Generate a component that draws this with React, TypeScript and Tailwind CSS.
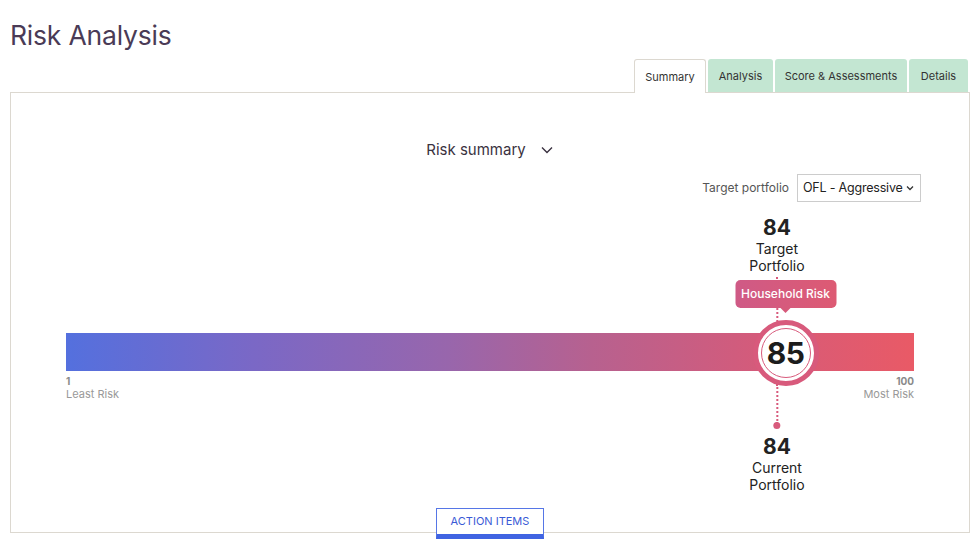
import React from "react";

const FONT = { fontFamily: "Inter, 'Noto Sans', 'Liberation Sans', sans-serif" };

function pos(v: number) {
  return ((v - 1) / 99) * 100;
}

export default function App() {
  const target = 84;
  const current = 84;
  const household = 85;
  return (
    <div className="w-[980px] h-[544px] bg-white overflow-hidden text-[#2b2b2b]" style={FONT}>
      <h1 className="pl-[10px] pt-[18px] text-[26.5px] leading-[34px] text-[#4a3b56] tracking-[-0.2px]">Risk Analysis</h1>
      <div className="flex justify-end gap-[2px] pr-[12px] mt-[7px]">
        <div className="w-[72px] h-[34px] flex items-center justify-center text-[11px] bg-white border border-[#dcd8d0] border-b-0 rounded-t-[3px] relative z-10 text-[#333] pt-[2px]">Summary</div>
        <div className="w-[65px] h-[33px] flex items-center justify-center text-[11px] bg-[#c3e6d2] rounded-t-[3px] text-[#333] pt-[2px]">Analysis</div>
        <div className="w-[132px] h-[33px] flex items-center justify-center text-[11px] bg-[#c3e6d2] rounded-t-[3px] text-[#333] pt-[2px]">Score &amp; Assessments</div>
        <div className="w-[59px] h-[33px] flex items-center justify-center text-[11px] bg-[#c3e6d2] rounded-t-[3px] text-[#333] pt-[2px]">Details</div>
      </div>
      <div className="relative ml-[10px] w-[960px] h-[441px] border border-[#dcd8d0] -mt-px">
        <div className="flex justify-center items-center gap-[14px] pt-[47px]">
          <span className="text-[15px] leading-[20px] text-[#3a3240]">Risk summary</span>
          <svg width="14" height="14" viewBox="0 0 14 14" fill="none" stroke="#3a3240" strokeWidth="1.4">
            <path d="M2 4.5 L7 9.5 L12 4.5" />
          </svg>
        </div>
        <div className="flex justify-end items-center gap-[8px] pr-[48px] mt-[14px]">
          <span className="text-[12px] text-[#555]">Target portfolio</span>
          <div className="w-[124px] h-[28px] border border-[#ccc] flex items-center justify-between px-[5px] text-[12.5px] text-[#222] whitespace-nowrap tracking-[-0.2px]">
            <span>OFL - Aggressive</span>
            <svg width="10" height="10" viewBox="0 0 10 10" fill="none" stroke="#333" strokeWidth="1.3">
              <path d="M2 3.5 L5 6.5 L8 3.5" />
            </svg>
          </div>
        </div>
        <div className="relative mx-[55px] w-[848px] h-[300px]">
          <div className="h-[131px]" />
          <div
            className="h-[38px] w-full"
            style={{ background: "linear-gradient(to right, #5470de 0%, #7a68c6 22%, #9866ac 45%, #b7618f 62%, #d55b7a 82%, #e95a66 100%)" }}
          />
          <div className="flex justify-between mt-[4px]">
            <div className="flex flex-col">
              <span className="text-[10px] leading-[13px] font-bold text-[#8a8a8a]">1</span>
              <span className="text-[11px] leading-[13px] text-[#999]">Least Risk</span>
            </div>
            <div className="flex flex-col items-end">
              <span className="text-[10px] leading-[13px] font-bold text-[#8a8a8a]">100</span>
              <span className="text-[11px] leading-[13px] text-[#999]">Most Risk</span>
            </div>
          </div>

          {/* target marker */}
          <div className="absolute top-[14px] -translate-x-1/2 flex flex-col items-center" style={{ left: `${pos(target)}%` }}>
            <span className="text-[21px] leading-[24px] font-bold text-[#222]">{target}</span>
            <span className="text-[14px] leading-[17px] text-[#222]">Target</span>
            <span className="text-[14px] leading-[17px] text-[#222]">Portfolio</span>
            <div className="h-[48px] border-l-[2px] border-dotted border-[#d85a7c] mt-[3px]" />
          </div>

          {/* household risk tooltip */}
          <div
            className="absolute top-[78px] -translate-x-1/2 h-[28px] px-[6px] flex items-center rounded-[5px] bg-[#d85a7c] text-white text-[12px] font-medium whitespace-nowrap"
            style={{ left: `${pos(household)}%`, background: "linear-gradient(to right, #cf5a86, #dd5a73)" }}
          >
            Household Risk
            <div className="absolute left-1/2 -bottom-[5px] -translate-x-1/2 w-0 h-0 border-l-[6px] border-r-[6px] border-t-[6px] border-l-transparent border-r-transparent border-t-[#d65a7b]" />
          </div>

          {/* current marker */}
          <div className="absolute top-[182px] -translate-x-1/2 flex flex-col items-center" style={{ left: `${pos(current)}%` }}>
            <div className="h-[40px] border-l-[2px] border-dotted border-[#d85a7c]" />
            <div className="w-[7px] h-[7px] rounded-full bg-[#d85a7c] -mt-[2px]" />
            <span className="text-[21px] leading-[24px] font-bold text-[#222] mt-[6px]">{current}</span>
            <span className="text-[14px] leading-[17px] text-[#222]">Current</span>
            <span className="text-[14px] leading-[17px] text-[#222]">Portfolio</span>
          </div>

          {/* household circle */}
          <div
            className="absolute top-[118px] -translate-x-1/2 w-[66px] h-[66px] rounded-full bg-white border-[5px] border-[#d85a7c] flex items-center justify-center"
            style={{ left: `${pos(household)}%` }}
          >
            <div className="w-[50px] h-[50px] rounded-full border border-[#d85a7c] flex items-center justify-center">
              <span className="text-[30px] leading-none font-bold text-[#1c1c1c] tracking-[-0.5px]">{household}</span>
            </div>
          </div>
        </div>
        <div className="absolute -bottom-[7px] left-1/2 -translate-x-1/2 w-[108px] h-[31px] bg-white border border-[#5676e6] border-b-[5px] border-b-[#4064e2] flex items-center justify-center text-[11px] text-[#3a5ad6]">
          ACTION ITEMS
        </div>
      </div>
    </div>
  );
}
